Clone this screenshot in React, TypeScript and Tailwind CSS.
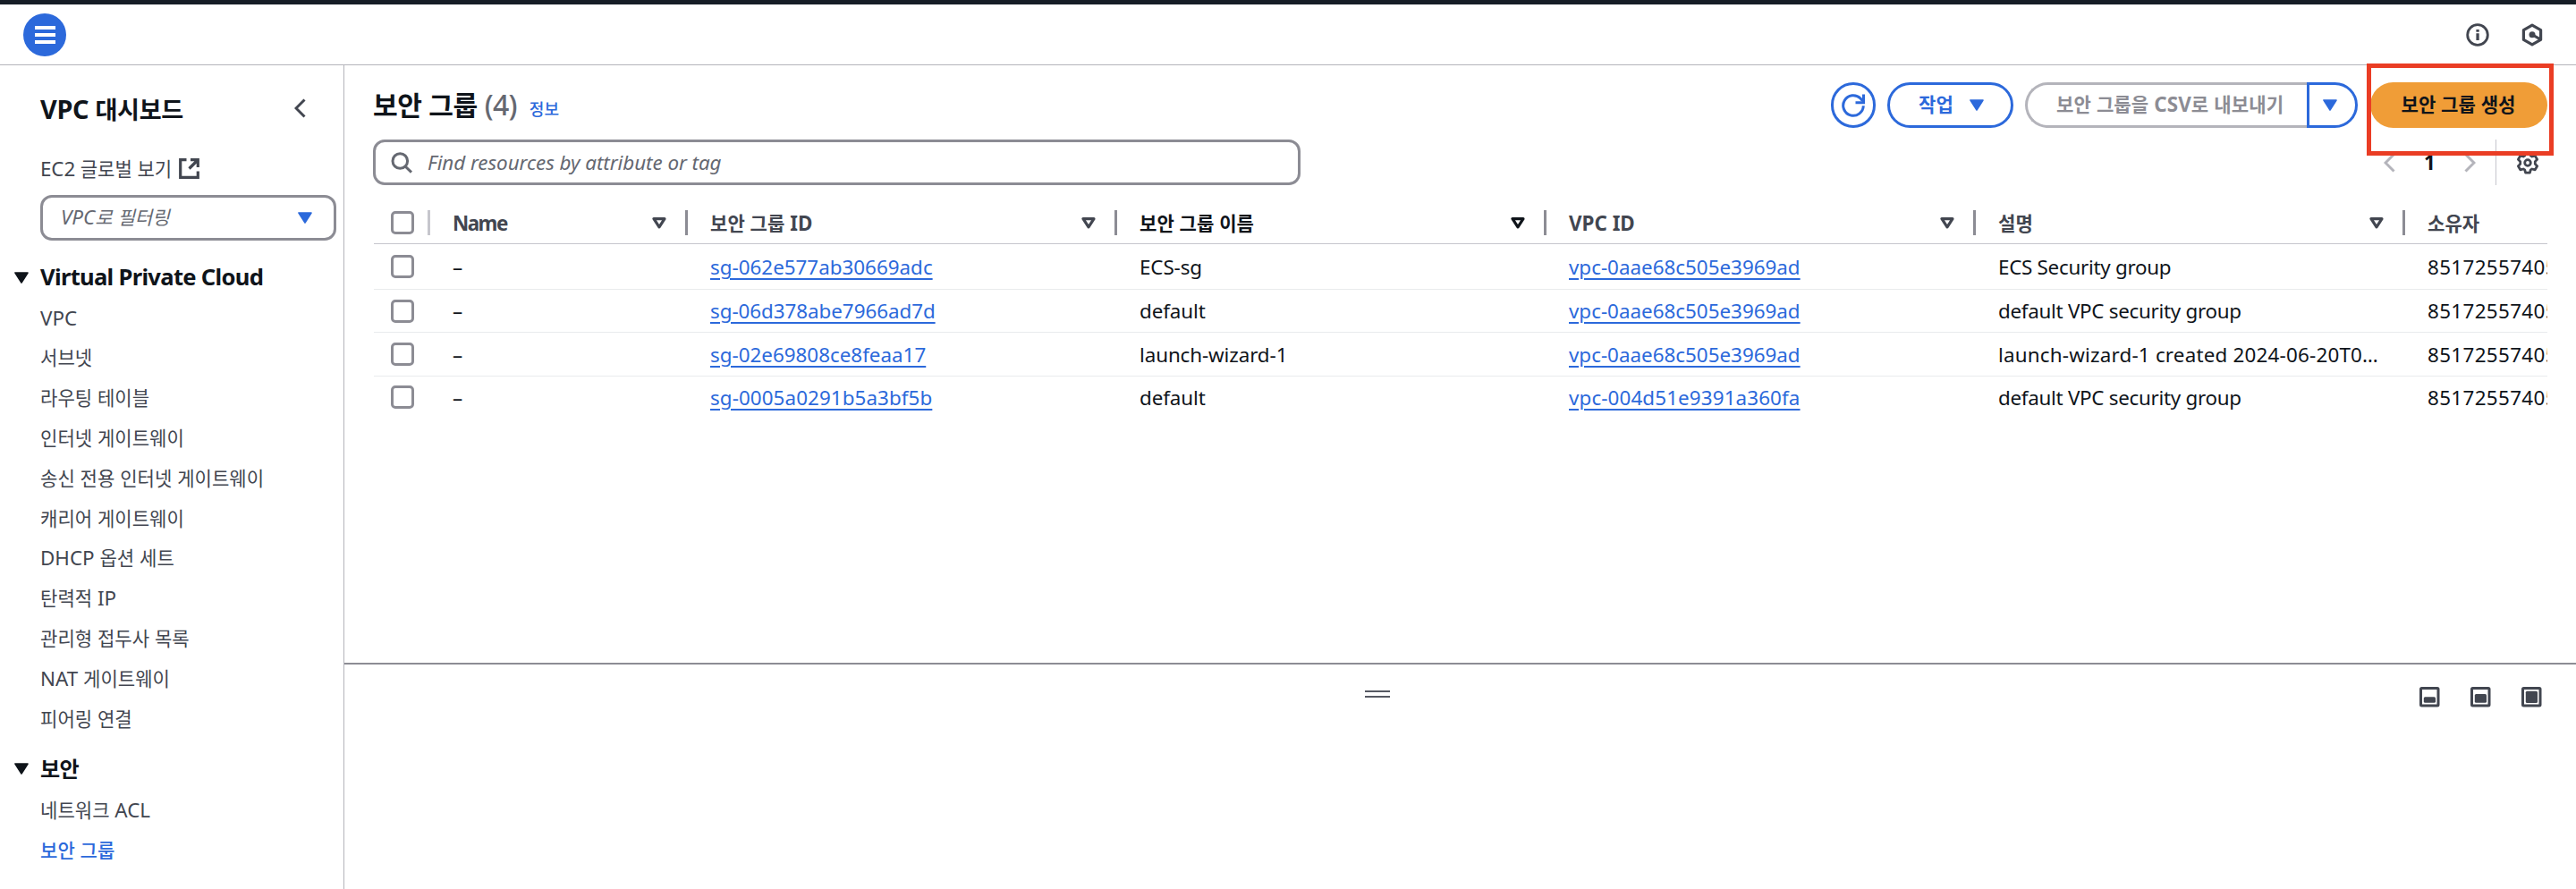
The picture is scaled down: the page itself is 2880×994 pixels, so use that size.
import type { ReactNode } from "react";

const vpcItems = [
  "VPC",
  "서브넷",
  "라우팅 테이블",
  "인터넷 게이트웨이",
  "송신 전용 인터넷 게이트웨이",
  "캐리어 게이트웨이",
  "DHCP 옵션 세트",
  "탄력적 IP",
  "관리형 접두사 목록",
  "NAT 게이트웨이",
  "피어링 연결",
];

const rows = [
  { id: "sg-062e577ab30669adc", name: "ECS-sg", vpc: "vpc-0aae68c505e3969ad", desc: "ECS Security group", h: "h-[51px]", pad: "pt-[3px]", idT: "", vpcT: "", descT: "tracking-[-0.28px]" },
  { id: "sg-06d378abe7966ad7d", name: "default", vpc: "vpc-0aae68c505e3969ad", desc: "default VPC security group", h: "h-[48px]", pad: "pt-[1px]", idT: "tracking-[-0.05px]", vpcT: "", descT: "tracking-[-0.28px]" },
  { id: "sg-02e69808ce8feaa17", name: "launch-wizard-1", vpc: "vpc-0aae68c505e3969ad", desc: "launch-wizard-1 created 2024-06-20T0…", h: "h-[49px]", pad: "pt-[2px]", idT: "", vpcT: "", descT: "tracking-[0.2px]" },
  { id: "sg-0005a0291b5a3bf5b", name: "default", vpc: "vpc-004d51e9391a360fa", desc: "default VPC security group", h: "h-[46px]", pad: "pt-[2px]", idT: "tracking-[0.08px]", vpcT: "tracking-[0.12px]", descT: "tracking-[-0.28px]" },
];

/* Hangul runs are set slightly smaller than the Latin text beside them. */
function Mixed({ text, className = "" }: { text: string; className?: string }) {
  const parts = text.split(/([\uac00-\ud7a3]+)/).filter(Boolean);
  return (
    <span className={`whitespace-pre ${className}`}>
      {parts.map((p, i) =>
        /[\uac00-\ud7a3]/.test(p) ? (
          <span key={i} className="text-[0.941em]">{p}</span>
        ) : (
          p
        ),
      )}
    </span>
  );
}

function Caret({ className = "" }: { className?: string }) {
  return (
    <svg viewBox="0 0 16 13" className={`h-[13px] w-4 shrink-0 ${className}`}>
      <path d="M1 1h14L8 12z" fill="currentColor" stroke="currentColor" strokeWidth="1.6" strokeLinejoin="round" />
    </svg>
  );
}

function SortIcon({ className = "" }: { className?: string }) {
  return (
    <svg viewBox="0 0 16 13" className={`h-[13px] w-4 shrink-0 ${className}`}>
      <path d="M2 1.7h12L8 10.8z" fill="none" stroke="currentColor" strokeWidth="3.2" strokeLinejoin="round" />
    </svg>
  );
}

function Checkbox() {
  return <span className="block size-[26px] shrink-0 rounded-[5px] border-3 border-[#8c8c94] bg-white" />;
}

function SectionTitle({ text }: { text: string }) {
  return (
    <div className="flex h-12 items-center pl-4 text-[#0f141a]">
      <Caret />
      <Mixed text={text} className="ml-[13px] text-[25.6px] font-bold tracking-[-0.7px]" />
    </div>
  );
}

function NavItem({ text, active = false }: { text: string; active?: boolean }) {
  return (
    <li className={`flex h-[44.8px] items-center pb-px pl-[45px] ${active ? "font-medium text-[#2c69db]" : "text-[#424650]"}`}>
      <Mixed text={text} />
    </li>
  );
}

function HeadCell({ text, dark = false }: { text: string; dark?: boolean }) {
  return (
    <div className={`flex w-[480px] shrink-0 items-center justify-between pr-[25px] font-bold ${dark ? "text-[#0f141a]" : "text-[#424650]"}`}>
      <Mixed text={text} className="pt-[2px]" />
      <div className="flex items-center gap-[21px]">
        <SortIcon />
        <span className="h-7 w-[3px] bg-[#8c8c94]" />
      </div>
    </div>
  );
}

function Link({ children }: { children: ReactNode }) {
  return (
    <a className="text-[#2c69db] underline decoration-2 underline-offset-[4px]">{children}</a>
  );
}

function PanelIcon({ y, h }: { y: number; h: number }) {
  return (
    <svg viewBox="0 0 23 23" className="size-[23px]">
      <rect x="1.5" y="1.5" width="19.5" height="19.5" rx="1" fill="none" stroke="#424650" strokeWidth="3" />
      <rect x="4.8" y={y} width="13.2" height={h} rx="1.5" fill="#424650" />
    </svg>
  );
}

function Sidebar() {
  return (
    <aside className="w-[385px] shrink-0 border-r border-[#b4b4bb]">
      <div className="flex h-[100px] items-center justify-between pr-[42px] pl-[45px] text-[#0f141a]">
        <Mixed text="VPC 대시보드" className="pb-[1px] text-[28.8px] font-bold tracking-[-0.3px]" />
        <svg viewBox="0 0 13 22" className="mb-1 h-[22px] w-[13px] text-[#424650]">
          <path d="M11.5 1.5 2 11l9.5 9.5" fill="none" stroke="currentColor" strokeWidth="3" />
        </svg>
      </div>
      <div className="flex h-[34px] items-center gap-[8px] pl-[45px] text-[#424650]">
        <Mixed text="EC2 글로벌 보기" className="pb-[2px] tracking-[-0.1px]" />
        <svg viewBox="0 0 23 23" className="mb-[3px] size-[23px]">
          <path d="M8.5 1.7H1.7v19.6h19.6V14.5M13 1.7h8.3V10M21 2 11.5 11.5" fill="none" stroke="currentColor" strokeWidth="3.2" />
        </svg>
      </div>
      <div className="mt-[11px] ml-[45px] flex h-[51px] w-[331px] items-center justify-between rounded-[13px] border-3 border-[#8c8c94] pr-6 pl-5 text-[#656871]">
        <Mixed text="VPC로 필터링" className="italic" />
        <Caret className="text-[#2c69db]" />
      </div>
      <div className="pt-[17px]">
        <SectionTitle text="Virtual Private Cloud" />
        <ul>
          {vpcItems.map((t) => (
            <NavItem key={t} text={t} />
          ))}
        </ul>
      </div>
      <div className="pt-[9px]">
        <SectionTitle text="보안" />
        <ul className="pt-px">
          <NavItem text="네트워크 ACL" />
          <NavItem text="보안 그룹" active />
        </ul>
      </div>
    </aside>
  );
}

function Actions() {
  return (
    <div className="flex h-[51px] items-stretch text-[#2c69db]">
      <button className="flex w-[50px] items-center justify-center rounded-full border-3 border-current">
        <svg viewBox="0 0 26 26" className="size-[26px] shrink-0">
          <path d="M24.3 13.3A11.3 11.3 0 1 1 21 5l2.4 2.7" fill="none" stroke="currentColor" strokeWidth="3" />
          <path d="M24.5.5v9.2h-9" fill="none" stroke="currentColor" strokeWidth="3" />
        </svg>
      </button>
      <button className="ml-[13px] flex w-[141px] items-center rounded-full border-3 border-current pl-8 font-bold">
        <Mixed text="작업" />
        <Caret className="ml-[18px]" />
      </button>
      <button className="ml-[13px] flex w-[315px] items-center rounded-l-full border-3 border-r-0 border-[#b4b4bb] pl-8 font-bold text-[#8c8c94]">
        <Mixed text="보안 그룹을 CSV로 내보내기" className="tracking-[0.1px]" />
      </button>
      <button className="flex w-[57px] items-center rounded-r-full border-3 border-current pl-[15px]">
        <Caret />
      </button>
      <div className="relative ml-[14px] flex">
        <button className="flex w-[198px] items-center justify-center rounded-full bg-[#f09d37] pr-px font-bold text-[#0f141a]">
          <Mixed text="보안 그룹 생성" />
        </button>
        <div className="absolute -top-[21px] -left-1 z-10 h-[103px] w-[209px] border-5 border-[#ea3d24]" />
      </div>
    </div>
  );
}

function Pagination() {
  return (
    <div className="flex h-[51px] items-center text-[#b4b4bb]">
      <svg viewBox="0 0 13 22" className="h-[22px] w-[13px]">
        <path d="M11.5 1.5 2 11l9.5 9.5" fill="none" stroke="currentColor" strokeWidth="3" />
      </svg>
      <span className="w-[77px] pt-[2px] text-center font-bold text-[#0f141a]">1</span>
      <svg viewBox="0 0 13 22" className="h-[22px] w-[13px]">
        <path d="M1.5 1.5 11 11l-9.5 9.5" fill="none" stroke="currentColor" strokeWidth="3" />
      </svg>
      <span className="ml-[22px] h-[51px] w-px bg-[#c6c6cd]" />
      <svg viewBox="0 0 26 26" className="mr-[9px] ml-[22px] size-[26px] text-[#424650]">
        <path
          d="M10.6 1.8h4.8l.9 3.3 1.6.9 3.3-.9 2.4 4.1-2.3 2.4v2.8l2.3 2.4-2.4 4.1-3.3-.9-1.6.9-.9 3.3h-4.8l-.9-3.3-1.6-.9-3.3.9-2.4-4.1 2.3-2.4v-2.8L2.4 9.2l2.4-4.1 3.3.9 1.6-.9z"
          fill="none"
          stroke="currentColor"
          strokeWidth="2.8"
          strokeLinejoin="round"
        />
        <circle cx="13" cy="13" r="3.3" fill="none" stroke="currentColor" strokeWidth="2.8" />
      </svg>
    </div>
  );
}

function Table() {
  return (
    <div className="mt-[20px] w-[2430px] overflow-hidden whitespace-nowrap">
      <div className="flex h-[46px] items-center border-b border-[#c6c6cd] pb-[1px] pl-[19px]">
        <Checkbox />
        <span className="mr-[26px] ml-[15px] h-7 w-[3px] bg-[#c6c6cd]" />
        <div className="-ml-px flex w-[288px] shrink-0 items-center justify-between pr-[26px] font-bold text-[#424650]">
          <span className="pt-[2px] tracking-[-1.5px]">Name</span>
          <div className="flex items-center gap-[21px]">
            <SortIcon />
            <span className="-mr-px h-7 w-[3px] bg-[#8c8c94]" />
          </div>
        </div>
        <HeadCell text="보안 그룹 ID" />
        <HeadCell text="보안 그룹 이름" dark />
        <HeadCell text="VPC ID" />
        <HeadCell text="설명" />
        <Mixed text="소유자" className="pt-[2px] font-bold text-[#424650]" />
      </div>
      {rows.map((r, i) => (
        <div
          key={r.id}
          className={`flex items-center pl-[19px] text-[#0f141a] ${r.h} ${i < 3 ? "border-b border-[#e9ebed]" : ""}`}
        >
          <Checkbox />
          <div className={`flex ${r.pad}`}>
            <span className="ml-[43px] w-[288px] shrink-0">–</span>
            <span className={`w-[480px] shrink-0 ${r.idT}`}><Link>{r.id}</Link></span>
            <span className="w-[480px] shrink-0 tracking-[-0.1px]">{r.name}</span>
            <span className={`w-[480px] shrink-0 ${r.vpcT}`}><Link>{r.vpc}</Link></span>
            <span className={`w-[480px] shrink-0 ${r.descT}`}>{r.desc}</span>
            <span className="shrink-0 tracking-[0.36px]">851725574053</span>
          </div>
        </div>
      ))}
    </div>
  );
}

export default function App() {
  return (
    <div className="flex h-[994px] w-[2880px] flex-col overflow-hidden bg-white font-['Noto_Sans','Noto_Sans_CJK_KR',sans-serif] text-[22.4px] leading-none">
      <header className="flex h-[73px] shrink-0 items-center justify-between border-t-5 border-b border-t-[#161d26] border-b-[#b4b4bb] pr-[37px] pl-[26px]">
        <button className="flex size-12 flex-col items-center justify-center gap-1 rounded-full bg-[#2c69db]">
          <span className="h-1 w-[23px] bg-white" />
          <span className="h-1 w-[23px] bg-white" />
          <span className="h-1 w-[23px] bg-white" />
        </button>
        <div className="flex gap-[35px] text-[#424650]">
          <svg viewBox="0 0 26 26" className="size-[26px]">
            <circle cx="13" cy="13" r="11.3" fill="none" stroke="currentColor" strokeWidth="2.8" />
            <path d="M11.4 11.2h3.3v7.8h-3.3zM11.4 7h3.3v2.7h-3.3z" fill="currentColor" />
          </svg>
          <svg viewBox="0 0 26 26" className="-mr-px size-[26px]">
            <path d="M13 2.2 22.6 7.6v10.8L13 23.8 3.4 18.4V7.6z" fill="none" stroke="currentColor" strokeWidth="3.2" strokeLinejoin="round" />
            <circle cx="13" cy="12.7" r="3.5" fill="currentColor" />
            <path d="m13 12.7 9 5.2" stroke="currentColor" strokeWidth="3" />
          </svg>
        </div>
      </header>
      <div className="flex min-h-0 flex-1">
        <Sidebar />
        <main className="flex min-w-0 flex-1 flex-col">
          <section className="h-[668px] pt-[19px] pl-[33px]">
            <div className="flex w-[2430px] items-center justify-between">
              <div className="-ml-px flex items-baseline text-[32px]">
                <Mixed text="보안 그룹" className="font-bold tracking-[-0.5px] text-[#0f141a]" />
                <span className="ml-[8px] font-medium tracking-[-0.7px] text-[#656871]">(4)</span>
                <Mixed text="정보" className="ml-[14px] text-[19.2px] font-medium text-[#2c69db]" />
              </div>
              <Actions />
            </div>
            <div className="mt-[13px] flex w-[2430px] items-center justify-between">
              <div className="-ml-px flex h-[51px] w-[1037px] items-center rounded-[13px] border-3 border-[#8c8c94] pl-[17px] text-[#656871]">
                <svg viewBox="0 0 24 24" className="size-6">
                  <circle cx="10.3" cy="10" r="8.3" fill="none" stroke="currentColor" strokeWidth="3" />
                  <path d="m16 16 7 6.6" stroke="currentColor" strokeWidth="3" />
                </svg>
                <span className="ml-[17px] pt-[2px] tracking-[-0.05px] italic">Find resources by attribute or tag</span>
              </div>
              <Pagination />
            </div>
            <Table />
          </section>
          <section className="flex flex-1 items-start border-t-2 border-[#8c8c94] pt-[25px]">
            <div className="mt-[4px] ml-[1141px] flex w-7 flex-col gap-1">
              <span className="h-[2px] bg-[#565963]" />
              <span className="h-[2px] bg-[#565963]" />
            </div>
            <div className="mr-[38px] ml-auto flex gap-[34px]">
              <PanelIcon y={11.3} h={6.5} />
              <PanelIcon y={8} h={9.8} />
              <PanelIcon y={4.8} h={13.2} />
            </div>
          </section>
        </main>
      </div>
    </div>
  );
}
